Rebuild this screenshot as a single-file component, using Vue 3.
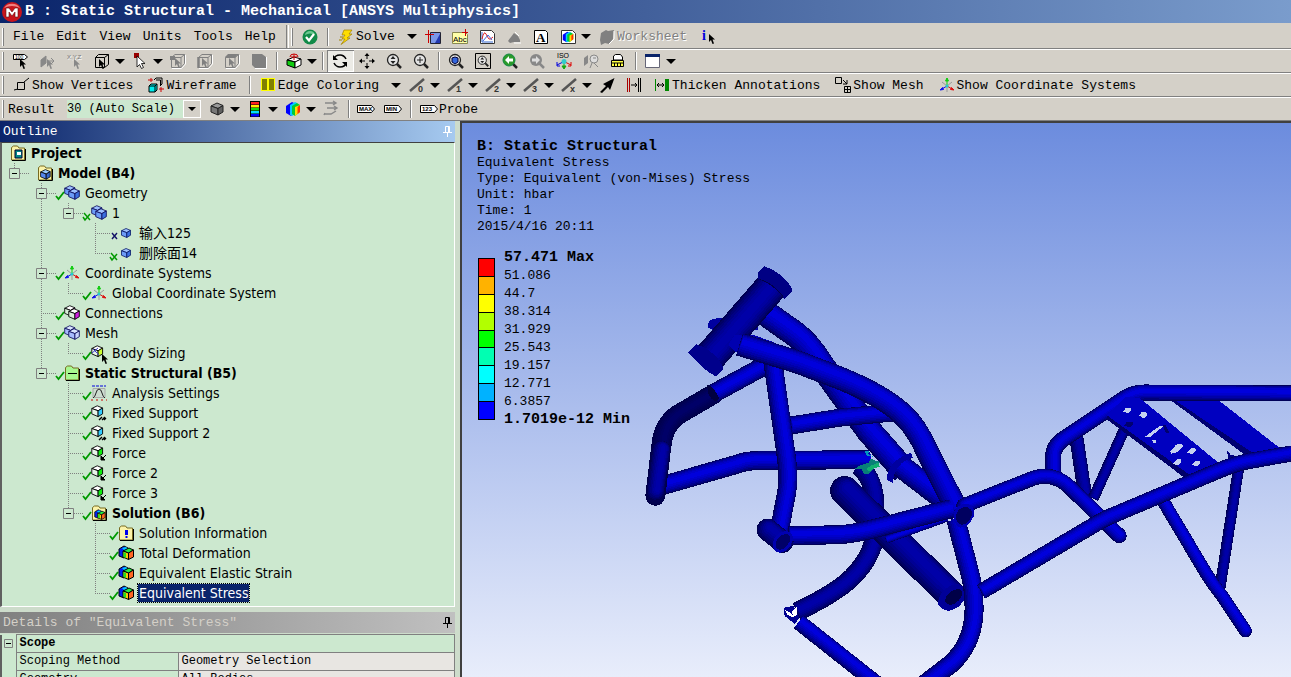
<template>
  <div class="app">
    <header class="title-bar">
      <svg class="logo" viewBox="0 0 22 22" aria-hidden="true">
        <circle cx="11" cy="11" r="10" fill="#c8141c" />
        <path d="M3 7a9 8 0 0 1 16 0q-8-4-16 0z" fill="#f08080" />
        <path d="M5 16V7h3l3 4 3-4h3v9h-3v-5l-3 4-3-4v5z" fill="#fff" stroke="#601010" stroke-width=".6" />
      </svg>
      <h1>B : Static Structural - Mechanical [ANSYS Multiphysics]</h1>
    </header>

    <div class="toolbar first">
      <span class="grip"></span>
      <nav class="menu">
        <button v-for="m in menus" :key="m" type="button">{{ m }}</button>
      </nav>
      <span class="band-edge"></span>
      <span class="grip"></span>
      <template v-for="(t, i) in standardTools" :key="i">
        <span v-if="t.sep" class="sep"></span>
        <button v-else type="button" :class="toolClass(t)" :aria-label="t.label || t.hint" :disabled="t.off">
          <svg class="icon" viewBox="0 0 16 16" v-html="icons[t.icon]"></svg>
          <span v-if="t.label">{{ t.label }}</span>
          <i v-if="t.drop" class="arrow"></i>
        </button>
      </template>
    </div>

    <div v-for="(bar, b) in toolbars" :key="b" class="toolbar">
      <span class="grip"></span>
      <template v-if="b === 2">
        <label class="result-label" for="result-scale">Result</label>
        <div class="combo">
          <select id="result-scale">
            <option>30 (Auto Scale)</option>
            <option>1.0 (True Scale)</option>
          </select>
          <span class="combo-btn"><i class="arrow"></i></span>
        </div>
      </template>
      <template v-for="(t, i) in bar" :key="i">
        <span v-if="t.sep" class="sep"></span>
        <button v-else type="button" :class="toolClass(t)" :aria-label="t.label || t.hint" :disabled="t.off">
          <svg class="icon" viewBox="0 0 16 16" v-html="icons[t.icon]"></svg>
          <span v-if="t.label">{{ t.label }}</span>
          <i v-if="t.drop" class="arrow"></i>
        </button>
      </template>
    </div>

    <main class="workspace">
      <aside class="side">
        <div class="pane-title">
          <h2>Outline</h2>
          <button type="button" class="pin" aria-label="Pin outline">
            <svg viewBox="0 0 9 11"><path d="M2.5 6V.5h4V6M5.5 1v5M0 6.5h9M4.5 7v4" /></svg>
          </button>
        </div>
        <ul class="tree">
          <li v-for="n in tree" :key="n.text" class="node">
            <span v-for="(g, k) in n.guides" :key="k" class="guide">
              <svg viewBox="0 0 27 20"><path :d="guidePaths[g]" /></svg>
              <button v-if="n.open && k === n.guides.length - 1" type="button" class="toggle" aria-label="Collapse">
                <svg viewBox="0 0 11 11"><path d="M.5.5h10v10H.5z" fill="#cce8cf" stroke="#808080" /><path d="M3 5.5h5" stroke="#000" /></svg>
              </button>
            </span>
            <svg class="status" viewBox="0 0 8 16" v-html="marks[n.mark]"></svg>
            <svg class="icon" viewBox="0 0 16 16" v-html="icons[n.icon]"></svg>
            <span :class="['node-text', { bold: n.bold, selected: n.selected }]">{{ n.text }}</span>
          </li>
        </ul>

        <div class="pane-title inactive">
          <h2>Details of "Equivalent Stress"</h2>
          <button type="button" class="pin" aria-label="Pin details">
            <svg viewBox="0 0 9 11"><path d="M2.5 6V.5h4V6M5.5 1v5M0 6.5h9M4.5 7v4" /></svg>
          </button>
        </div>
        <table class="details">
          <colgroup>
            <col class="col-gutter" />
            <col class="col-name" />
            <col />
          </colgroup>
          <tbody>
            <tr>
              <td class="gutter">
                <button type="button" class="toggle" aria-label="Collapse scope">
                  <svg viewBox="0 0 9 9"><path d="M.5.5h8v8h-8z" fill="none" stroke="#808080" /><path d="M2 4.5h5" stroke="#000" /></svg>
                </button>
              </td>
              <th colspan="2">Scope</th>
            </tr>
            <tr>
              <td class="gutter"></td>
              <td>Scoping Method</td>
              <td class="value">Geometry Selection</td>
            </tr>
            <tr>
              <td class="gutter"></td>
              <td>Geometry</td>
              <td class="value">All Bodies</td>
            </tr>
          </tbody>
        </table>
      </aside>

      <section class="viewport">
        <svg class="model" viewBox="462 124 829 553" preserveAspectRatio="xMinYMin slice" aria-label="Stress plot of the frame">
          <g v-for="(p, i) in parts" :key="i">
            <template v-if="p.w">
              <path
                v-for="(s, k) in shades"
                :key="k"
                :d="p.d"
                fill="none"
                :stroke="s[p.tone || 'lit']"
                :stroke-width="p.w * s.k"
                :stroke-linecap="p.cap || 'butt'"
                stroke-linejoin="round"
                :transform="`translate(${p.w * s.shift} ${-p.w * s.shift})`"
              />
            </template>
            <path v-else :d="p.d" :fill="p.fill" />
          </g>
        </svg>
        <div class="info">
          <p class="strong">B: Static Structural</p>
          <p v-for="line in info" :key="line">{{ line }}</p>
        </div>
        <div class="legend">
          <div class="swatches">
            <span v-for="c in bands" :key="c" :style="{ background: c }"></span>
          </div>
          <ol>
            <li v-for="(v, i) in levels" :key="v" :class="{ strong: i === 0 || i === 9 }">{{ v }}</li>
          </ol>
        </div>
      </section>
    </main>
  </div>
</template>

<script setup>
const menus = ["File", "Edit", "View", "Units", "Tools", "Help"];

// isometric cube: top, left and right face colours
const cube = (t, l, r, s = "#000") =>
  `<path d="M2 5 8 2l6 2.5-5 3z" fill="${t}" stroke="${s}"/><path d="M2 5l7 2.5V14l-7-3z" fill="${l}" stroke="${s}"/><path d="M9 7.5 14 4.5V11l-5 3z" fill="${r}" stroke="${s}"/>`;
const small = (t, l, r) => `<g transform="translate(2 2) scale(.75)">${cube(t, l, r, "#001060")}</g>`;
const pair = (t, l, r, s = "#101060") =>
  `<g transform="translate(-1 -1) scale(.85)">${cube(t, l, r, s)}</g><g transform="translate(3 2) scale(.88)">${cube(t, l, r, s)}</g>`;
const load = (r, extra) => `<g transform="translate(-1 -1) scale(.9)">${cube("#fff", "#e8f4e8", r)}</g>${extra}`;
const cursor = (c = "#000", x = 7, y = 6) =>
  `<path transform="translate(${x} ${y})" d="M0 0v8l2-2 1.500 4 1.500-.5-1.500-4H6z" fill="${c}"/>`;
const grayCube = (face) =>
  `<path d="M1.500 4.500 5 1.500h9.500v9L11 14.500H1.500z" fill="none" stroke="#808080"/><path d="M1.500 4.500H11v10M11 4.500l3.500-3" fill="none" stroke="#808080"/><path d="M15.500 2v9l-4 4.500H2" fill="none" stroke="#fff"/>${face}${cursor("#808080", 5, 5)}`;
const lens = (inner, c = "#222") =>
  `<path d="M10.500 10.500 15 15" stroke="${c}" stroke-width="2.500"/><circle cx="7" cy="7" r="5.500" fill="#e4e4e4" stroke="${c}" stroke-width="1.300"/>${inner}`;
const axes =
  '<path d="M8 8V1M8 1 6.500 4h3z" stroke="#1c1" fill="#1c1"/><path d="M8 9l6 3.500M15 13l-3.500-.5 1-2z" stroke="#d11" fill="#d11"/><path d="M8 9l-6 3.500M1 13l3.500-.5-1-2z" stroke="#11e" fill="#11e"/><path d="M3 5l5 4 5-4M8 9v6" stroke="#999" fill="none"/><circle cx="8" cy="9" r="1.500" fill="#2cc"/>';
const folder = (inner, c = "#fbf3a8") =>
  `<path d="M1.500 15V2.500l2-1.500h4l1.500 2h5.500v12z" fill="${c}" stroke="#776a20"/><path d="M2 15.500h13.500V4" fill="none" stroke="#000"/>${inner}`;
const edge = (n) =>
  `<path d="M1 14 15 2" stroke="#555" stroke-width="2.500"/><text x="9" y="15" font-size="9" font-weight="700" fill="#333">${n}</text>`;
const tag = (t) =>
  `<path d="M-.5 4.500h14l3 3.500-3 3.500h-14z" fill="#fff" stroke="#000"/><text x="1" y="10" font-size="6" font-weight="700">${t}</text>`;
const rainbow =
  '<path d="M1 5 7 1 11 3v8l-5 4-5-3z" fill="#00f"/><path d="M5 4l5-3 2 1v10l-5 3-2-1z" fill="#0cf"/><path d="M7 5l5-3 3 2v7l-5 4-3-2z" fill="#0c3"/><path d="M10 6l5-2v7l-5 4z" fill="#fd0"/><path d="M12.500 6 15 4v7l-2.500 2z" fill="#f30"/>';
const rainbowPair =
  '<path d="M1 4 6 1l4 2v7l-4 3-5-2z" fill="#02e" stroke="#000"/><path d="M4 3l4-1 2 2-3 2z" fill="#0cf"/><path d="M5 6l6-3 4.500 2-5 3z" fill="#2e4" stroke="#000"/><path d="M5 6l5.500 2v6.500L5 12z" fill="#fc0" stroke="#000"/><path d="M10.500 8l5-3v7l-5 2.500z" fill="#f62" stroke="#000"/><path d="M5.500 7 8 8v5l-2.500-1z" fill="#2d2"/>';

const icons = {
  check: '<circle cx="8" cy="8" r="7.500" fill="#118a48"/><path d="M3 6a5 4 0 0 1 10 0q-5-3-10 0z" fill="#6cc890"/><path d="M4 8l3 3.500L12 5" stroke="#fff" stroke-width="2.200" fill="none"/>',
  bolt: '<path d="M6 1h8l-3 4h3l-5 4h3L3 15.500 7 10H4l3-4H4z" fill="#fd0" stroke="#a08000" stroke-width=".7"/><path d="M2 8h3M1 11h3" stroke="#a08000"/>',
  section: '<path d="M5.500 3.500h10v11h-10z" fill="#7a96e8" stroke="#223"/><path d="M10 14 15 5v9z" fill="#2338b0"/><path d="M0 5.500h9M3.500 1v13" stroke="#c00"/>',
  note: '<path d="M.5 3.500h13l2 2v9H.5z" fill="#ffffa8" stroke="#888850"/><text x="1" y="13" font-size="8">Abc</text><path d="M13.500 0v7M10 3.500h6" stroke="#c00"/>',
  chart: '<path d="M1.500 1.500h11l3 3v10h-14z" fill="#fff" stroke="#333"/><path d="M3 3v10h11" stroke="#36c" fill="none"/><path d="M3 10q2-9 4-5t3 5 4-2" stroke="#d22" fill="none"/><path d="M4 12l5-6 4 5" stroke="#46d" fill="none"/>',
  ghost: '<path d="M2 12q2-3 3-4l3-4 4 3 2 4v2H8l-4 1z" fill="#808080"/><path d="M9 3l4 4M8 14h7" stroke="#fff"/>',
  letter: '<path d="M1.500 1.500h11l2 2v11h-13z" fill="#fff" stroke="#000"/><text x="3" y="13" font-size="13" font-weight="700" font-family="Liberation Serif, serif">A</text>',
  picture: `<path d="M1.500 1.500h11l3 3v10h-14z" fill="#fff" stroke="#333"/><g transform="translate(2 2) scale(.75)">${rainbow}</g>`,
  worksheet: '<path d="M2 4l5-3 2 1 6-1-1 9-4 5-4-1-4 2-1-5z" fill="#808080"/><path d="M15 2v8l-5 5" stroke="#fff" fill="none"/>',
  help: `<text x="1" y="11" font-size="14" font-weight="700" fill="#00d" font-family="Liberation Serif, serif">i</text>${cursor("#000", 8, 5)}`,
  tagPick: `<path d="M.5 1.500h11l3 2.500-3 2.500H.5z" fill="#fff" stroke="#000"/><text x="2" y="6" font-size="5">100</text>${cursor()}`,
  axisPick: `<path d="M1 14V7l5-4v7zM7 8h7M11 5l3 3-3 3" fill="none" stroke="#888"/><path d="M1 14V7l5-4v7z" fill="#888"/>${cursor("#888")}`,
  xyz: `<text x="0" y="6" font-size="6" fill="#777">X,Y,Z</text>${cursor("#888")}`,
  boxPick: `<path d="M1.500 4.500 4.500 1.500h10v10l-4 3h-9zM1.500 4.500h9v10M10.500 4.500l4-3" fill="none" stroke="#000"/>${cursor("#000", 5, 6)}`,
  pointer: '<path d="M2 0h5v5H2z" fill="#900"/><path d="M5 3v11l2.500-2.500 2 4 2-1-2-4H13z" fill="#fff" stroke="#000" stroke-width=".8"/>',
  vertex: grayCube('<path d="M0 3h5v4H0z" fill="#808080"/>'),
  edgePick: grayCube('<path d="M1.500 4v11" stroke="#808080" stroke-width="2.500"/>'),
  face: grayCube('<path d="M1 4l3-3h10l-3 4z" fill="#808080"/>'),
  body: '<path d="M1 1h10l4 3v11H4l-3-3z" fill="#808080"/><path d="M15.500 4v11.500H4" stroke="#fff" fill="none"/>',
  extend: `<path d="M1 7l7-3 7 2-5 3z" fill="#fff" stroke="#000"/><path d="M1 7l8 2v6l-8-3z" fill="#1c1" stroke="#000"/><path d="M9 9l6-3v6l-6 3z" fill="#fff" stroke="#000"/><path d="M4 4a4 3 0 0 1 8 0M8 1v6M5 4h6" stroke="#c00" fill="none"/>`,
  rotate: '<path d="M2 6q1-4 6-4 4 0 6 4M14 10q-1 4-6 4-4 0-6-4" stroke="#000" fill="none" stroke-width="1.500"/><path d="M1 2v5h5zM15 14V9h-5z"/>',
  pan: '<path d="M8 1v5M8 10v5M1 8h5M10 8h5" stroke="#000"/><path d="M8 0 5.500 3h5zM8 16l-2.500-3h5zM0 8l3-2.500v5zM16 8l-3-2.500v5z"/>',
  zoom: lens('<path d="M7 3 4.500 6h5zM7 11 4.500 8h5z" fill="#222"/>'),
  zoomIn: lens('<path d="M7 4v6M4 7h6" stroke="#222"/>'),
  zoomFit: lens('<path d="M4 5l3-1 3 1v4l-3 2-3-2z" fill="#36d" stroke="#003"/>'),
  zoomBox: `<path d="M.5.5h15v15H.5z" fill="none" stroke="#000"/><g transform="translate(2 2) scale(.75)">${lens('<path d="M7 3 4.500 6h5zM7 11 4.500 8h5z" fill="#222"/>')}</g>`,
  prev: '<path d="M10.500 10.500 15 15" stroke="#222" stroke-width="2.500"/><circle cx="7" cy="7" r="6" fill="#2a9a2a" stroke="#184"/><path d="M3 7l4-4v2.500h4v3H7V11z" fill="#fff"/>',
  next: '<path d="M10.500 10.500 15 15" stroke="#888" stroke-width="2.500"/><circle cx="7" cy="7" r="6" fill="#888"/><path d="M11 7 7 3v2.500H3v3h4V11z" fill="#ddd"/>',
  iso: '<text x="1" y="5" font-size="7">ISO</text><path d="M8 9v6M6 13l2 3 2-3z" stroke="#1a1" fill="#1a1"/><path d="M7 9l-6 3M1 9v4h3" stroke="#00d" fill="none"/><path d="M9 9l6 3M15 9v4h-3" stroke="#d00" fill="none"/><circle cx="8" cy="8.500" r="2.500" fill="#3cc"/>',
  look: '<path d="M1 13V5l4-3v8z" fill="#888"/><circle cx="11" cy="6" r="4" fill="#ddd" stroke="#888"/><path d="M10 5h3M9 10l-2 5M11 10l4 4" stroke="#888"/>',
  ruler: '<path d="M3.500 7V3l2-1.500h5L12.500 4v3z" fill="#fff" stroke="#000"/><path d="M1.500 7.500h12v6h-12z" fill="#ff4" stroke="#000"/><path d="M2 10h11M4.500 10v3M7.500 10v3M10.500 10v3" stroke="#000"/>',
  window: '<path d="M.5 1.500h14v13H.5z" fill="#fff" stroke="#667"/><path d="M0 1h15v3H0z" fill="#0a246a"/>',
  vertices: '<path d="M3.500 5.500h7v7h-7zM0 13l4-1M10 5l5-4" fill="none" stroke="#000"/>',
  wire: '<path d="M6 3l2-2h6v6l-2 2M8 3h4.500v6" fill="none" stroke="#000"/><path d="M1 9l2-2h6v6l-2 2H1z" fill="#0ee" stroke="#000"/><path d="M1 9h6v6M7 9l2-2" stroke="#000" fill="none"/><path d="M0 3h5M3 1v4M11 12h5M13 10v5" stroke="#c00"/>',
  coloring: '<path d="M1 1h14v13H1z" fill="#ff0"/><path d="M2 2h5v11H2zM9 2h5v11H9z" fill="#808000"/>',
  e0: edge("0"), e1: edge("1"), e2: edge("2"), e3: edge("3"), ex: edge("x"),
  thickArrow: '<path d="M1 15l6-6-3-2L15.500 1 11 13l-2-3-6 6z"/>',
  bars: '<path d="M1.500 1v14M3.500 1v14" stroke="#a00"/><path d="M12.500 1v14M14.500 1v14M5 8h6M9 6l2 2-2 2" stroke="#000" fill="none"/>',
  thicken: '<path d="M1.500 2v12" stroke="#080"/><path d="M3 8h7M5 6 3 8l2 2M8 6l2 2-2 2" stroke="#000" fill="none"/><path d="M11 2h4v12h-4z" fill="#080"/>',
  mesh: '<path d="M.5.5h6v6h-6zM9.500 9.500h6v6h-6zM9.500 12.500h6M12.500 9.500v6M8 3l4 4M12 3v4H8" fill="none" stroke="#000"/>',
  axes,
  grayBox: cube("#999", "#777", "#606060", "#222"),
  contour: '<path d="M3 0h10v16H3z"/><path d="M4 1h8v2.500H4z" fill="#f22"/><path d="M4 4h8v2.500H4z" fill="#fe0"/><path d="M4 7h8v2.500H4z" fill="#1d1"/><path d="M4 10h8v2.500H4z" fill="#0df"/><path d="M4 13h8v2.500H4z" fill="#00f"/>',
  rainbow,
  vectors: '<path d="M2 2h10M10 0l3 2-3 2M4 7h9M11 5l3 2-3 2M1 13h7l5-3M2 12l-1 2" fill="none" stroke="#888" stroke-width="1.400"/>',
  max: tag("MAX"), min: tag("MIN"), probe: tag("123"),
  project: folder('<path d="M5 5h7v8H5z" fill="#088" stroke="#003"/><path d="M7 7h4v3H7z" fill="#fff"/>'),
  model: folder(`<g transform="translate(2 3) scale(.8)">${cube("#9cf", "#58e", "#36c")}</g>`),
  geometry: pair("#9cc0ff", "#6c9cf8", "#3c70e0"),
  solid: small("#9cc0ff", "#6c9cf8", "#3c70e0"),
  connections: pair("#fff", "#d8f0d8", "#d020e0", "#000"),
  meshTree: pair("#d8e4ff", "#a8bcff", "#c8d4ff"),
  sizing: load("#cf3", cursor("#000", 11, 9)) + '<path d="M2 4l6 6M1 8l6-5" stroke="#44c"/>',
  analysis: folder('<path d="M4 8.500h9" stroke="#000"/>', "#a8f890"),
  settings: '<path d="M2 3.500h12v9H2z" fill="#ccdccf" stroke="#aaa"/><path d="M2 13q2-1 3-5t3-4 3 4 3 5" fill="none" stroke="#222"/><path d="M1 1h14" stroke="#00d" stroke-width="1" stroke-dasharray="3 1"/><path d="M0 15h16" stroke="#c00" stroke-width="1" stroke-dasharray="2 3"/>',
  fixed: load("#3cf", '<path d="M8 15l3-3M11 15l3-3M13 15l2-2" stroke="#000" stroke-width="1.400"/>'),
  force: load("#1e1", '<path d="M10 15v-4l4 4zM15 10l-4 4" stroke="#000"/>'),
  solution: folder(`<g transform="translate(3 4) scale(.72)">${rainbowPair}</g>`),
  infoTree: folder('<path d="M7 5h3v5H7z" fill="#00e"/><path d="M7.500 11h2v2h-2z" fill="#00e"/>'),
  result: rainbowPair,
};

const tick = '<path d="M0 11l2.500 3L8 7" fill="none" stroke="#090" stroke-width="1.800"/>';
const marks = {
  none: "",
  tick,
  cross: '<path d="M2 8l5 6M7 8l-5 6" stroke="#116" stroke-width="1.400"/>',
  tickCross: '<path d="M0 12l2 3 5-6M1 8l6 7" fill="none" stroke="#090" stroke-width="1.500"/>',
};

const sep = { sep: true };

const standardTools = [
  { icon: "check", hint: "Status" },
  sep,
  { icon: "bolt", label: "Solve", drop: true },
  { icon: "section", hint: "New section plane" },
  { icon: "note", hint: "Annotation" },
  { icon: "chart", hint: "Chart" },
  { icon: "ghost", hint: "Symbols", off: true },
  { icon: "letter", hint: "Comment" },
  { icon: "picture", hint: "Figure", drop: true },
  { icon: "worksheet", label: "Worksheet", off: true },
  { icon: "help", hint: "Selection information" },
];

const toolbars = [
  [
    { icon: "tagPick", hint: "Label" },
    { icon: "axisPick", hint: "Direction", off: true },
    { icon: "xyz", hint: "Hit point", off: true },
    { icon: "boxPick", hint: "Select type", drop: true },
    { icon: "pointer", hint: "Select mode", drop: true },
    { icon: "vertex", hint: "Vertex", off: true },
    { icon: "edgePick", hint: "Edge", off: true },
    { icon: "face", hint: "Face", off: true },
    { icon: "body", hint: "Body", off: true },
    sep,
    { icon: "extend", hint: "Extend", drop: true },
    sep,
    { icon: "rotate", hint: "Rotate", active: true },
    { icon: "pan", hint: "Pan" },
    { icon: "zoom", hint: "Zoom" },
    { icon: "zoomIn", hint: "Box zoom" },
    sep,
    { icon: "zoomFit", hint: "Zoom to fit" },
    { icon: "zoomBox", hint: "Magnifier" },
    { icon: "prev", hint: "Previous view" },
    { icon: "next", hint: "Next view", off: true },
    { icon: "iso", hint: "Isometric view" },
    { icon: "look", hint: "Look at", off: true },
    { icon: "ruler", hint: "Manage views" },
    sep,
    { icon: "window", hint: "Viewports", drop: true },
  ],
  [
    { icon: "vertices", label: "Show Vertices" },
    { icon: "wire", label: "Wireframe" },
    sep,
    { icon: "coloring", label: "Edge Coloring", drop: true },
    { icon: "e0", hint: "Free edges", drop: true },
    { icon: "e1", hint: "Single edges", drop: true },
    { icon: "e2", hint: "Double edges", drop: true },
    { icon: "e3", hint: "Triple edges", drop: true },
    { icon: "ex", hint: "Multiple edges", drop: true },
    { icon: "thickArrow", hint: "Edge direction" },
    { icon: "bars", hint: "Connections" },
    { icon: "thicken", label: "Thicken Annotations" },
    { icon: "mesh", label: "Show Mesh" },
    { icon: "axes", label: "Show Coordinate Systems" },
  ],
  [
    { icon: "grayBox", hint: "Geometry", drop: true },
    { icon: "contour", hint: "Contours", drop: true },
    { icon: "rainbow", hint: "Edges", drop: true },
    { icon: "vectors", hint: "Vectors", off: true },
    sep,
    { icon: "max", hint: "Maximum" },
    { icon: "min", hint: "Minimum" },
    sep,
    { icon: "probe", label: "Probe" },
  ],
];

const toolClass = (t) => ["tool", { labelled: t.label, drop: t.drop, active: t.active }];

// guides, one letter per level: "v" passes by, "t" branches, "l" ends, "e" is empty
const guidePaths = {
  v: "M12.5 0v20",
  t: "M12.5 0v20M12 10.5h15",
  l: "M12.5 0v10M12 10.5h15",
  e: "",
};

const tree = [
  { text: "Project", icon: "project", guides: "", mark: "none", bold: true },
  { text: "Model (B4)", icon: "model", guides: "l", mark: "none", bold: true, open: true },
  { text: "Geometry", icon: "geometry", guides: "et", mark: "tick", open: true },
  { text: "1", icon: "geometry", guides: "evl", mark: "tickCross", open: true },
  { text: "输入125", icon: "solid", guides: "evet", mark: "cross" },
  { text: "删除面14", icon: "solid", guides: "evel", mark: "tickCross" },
  { text: "Coordinate Systems", icon: "axes", guides: "et", mark: "tick", open: true },
  { text: "Global Coordinate System", icon: "axes", guides: "evl", mark: "tick" },
  { text: "Connections", icon: "connections", guides: "et", mark: "tick" },
  { text: "Mesh", icon: "meshTree", guides: "et", mark: "tick", open: true },
  { text: "Body Sizing", icon: "sizing", guides: "evl", mark: "tick" },
  { text: "Static Structural (B5)", icon: "analysis", guides: "el", mark: "tick", bold: true, open: true },
  { text: "Analysis Settings", icon: "settings", guides: "eet", mark: "tick" },
  { text: "Fixed Support", icon: "fixed", guides: "eet", mark: "tick" },
  { text: "Fixed Support 2", icon: "fixed", guides: "eet", mark: "tick" },
  { text: "Force", icon: "force", guides: "eet", mark: "tick" },
  { text: "Force 2", icon: "force", guides: "eet", mark: "tick" },
  { text: "Force 3", icon: "force", guides: "eet", mark: "tick" },
  { text: "Solution (B6)", icon: "solution", guides: "eel", mark: "tick", bold: true, open: true },
  { text: "Solution Information", icon: "infoTree", guides: "eeet", mark: "tick" },
  { text: "Total Deformation", icon: "result", guides: "eeet", mark: "tick" },
  { text: "Equivalent Elastic Strain", icon: "result", guides: "eeet", mark: "tick" },
  { text: "Equivalent Stress", icon: "result", guides: "eeel", mark: "tick", selected: true },
].map((n) => ({ ...n, guides: [...n.guides] }));

const info = [
  "Equivalent Stress",
  "Type: Equivalent (von-Mises) Stress",
  "Unit: hbar",
  "Time: 1",
  "2015/4/16 20:11",
];

const bands = ["#ff0000", "#ffb200", "#ffff00", "#b2ff00", "#00ff00", "#00ffb2", "#00ffff", "#00b2ff", "#0000ff"];
const levels = [
  "57.471 Max", "51.086", "44.7", "38.314", "31.929",
  "25.543", "19.157", "12.771", "6.3857", "1.7019e-12 Min",
];

// every tube is stroked several times, from its dark rim to its lit middle
const shades = [
  { k: 1, shift: 0, lit: "#000058", mid: "#000050", dark: "#000048" },
  { k: 0.92, shift: 0.02, lit: "#000078", mid: "#000064", dark: "#00004c" },
  { k: 0.82, shift: 0.04, lit: "#000090", mid: "#000074", dark: "#000050" },
  { k: 0.7, shift: 0.06, lit: "#0000a8", mid: "#000084", dark: "#000056" },
  { k: 0.56, shift: 0.08, lit: "#0000bc", mid: "#000094", dark: "#00005c" },
  { k: 0.42, shift: 0.1, lit: "#0000cc", mid: "#0000a0", dark: "#000062" },
  { k: 0.24, shift: 0.11, lit: "#0000dc", mid: "#0000a8", dark: "#000068" },
];

const parts = [
  // rear legs and plates
  { d: "M1075 436 1084 496", w: 14, tone: "mid" },
  { d: "M1124 428 1092 499", w: 11, tone: "mid" },
  { d: "M1237 470 1218 592", w: 11, tone: "mid" },
  { d: "M1161 500 1205 574Q1211 584 1220 595L1244 631", w: 13, cap: "round" },
  { d: "M1171 399 1180 394 1215 399 1279 449 1250 456z", fill: "#0000c0" },
  { d: "M1171 399 1251 453 1246 457 1171 402z", fill: "#000070" },
  { d: "M1052 474V458Q1052 446 1063 439L1120 401Q1131 393 1143 393L1295 394", w: 16 },
  { d: "M1106 416 1125 397 1139 399 1217 463 1210 472 1185 476z", fill: "#0000c0" },
  { d: "M1106 416 1188 475 1183 478 1106 420z", fill: "#000068" },
  { d: "M1122 412l3-4 4 0 1 3-3 3zM1138 416l3-4 4 1 1 3-4 3zM1169 452l6-7 5-1 2 3-7 6-5 1zM1186 453l3-4 4-1 2 3-4 4zM1172 464l3-4 4-1 1 4-4 3zM1191 465l2-3 5-1 1 3-4 3zM1144 437l15-11 3 1-14 11zM1151 441l3-1 1 3-3 0z", fill: "#c4d0f0" },
  { d: "M1123 426l3-4 5 0 1 3-4 3zM1161 425l3 0 4 8-3 1z", fill: "#000070" },
  { d: "M1225 450l4 5 8 2-1 3-9-2z", fill: "#000080" },

  // lower loop behind the frame
  { d: "M858 466Q874 480 874 505V535Q872 556 852 577 836 593 796 612", w: 19, tone: "mid" },
  { d: "M798 622 884 690", w: 16 },

  // left handle
  { d: "M662 486 735 465Q745 461 758 461L868 460", w: 19 },
  { d: "M655 496 661 446Q663 425 678 415L714 394", w: 20, tone: "dark", cap: "round" },
  { d: "M655 492 661 450", w: 18, tone: "mid", cap: "round" },
  { d: "M713 394 772 362", w: 19 },
  { d: "M707 386q6 0 12 13l-4 3q-9-5-8-16z", fill: "#000040" },

  // down tube and its collar
  { d: "M764 313 795 335Q808 345 821 366L868 431 904 472", w: 26 },
  { d: "M898 465 958 511", w: 23 },
  { d: "M886 480q0-18 24-27l2 5q-18 5-20 25z", fill: "#0000a0" },
  { d: "M707 328q0-9 10-9h40v12h-44z", fill: "#0000a0" },

  // stress concentration
  { d: "M859 466l9-3 2-4 5 2 4 1-1 4-6 4-4 4-5 0-2-5-7 0z", fill: "#088078" },
  { d: "M866 469l4-3 8-3 1 4-6 2-5 3z", fill: "#10b070" },
  { d: "M864 451l5 1-2 2 5 3-6-1z", fill: "#0098c0" },

  // head tube
  { d: "M771 287 709 358", w: 32, tone: "mid" },
  { d: "M757 274 764 267Q785 275 792 291L784 300Q776 285 757 279z", fill: "#000084" },
  { d: "M757 279q18 5 27 20-9-12-27-20", fill: "#000048" },
  { d: "M688 353 696 345Q716 352 723 369L716 377Q704 372 688 353z", fill: "#00008c" },

  // fork crossing
  { d: "M790 426 840 418 892 413", w: 18 },
  { d: "M773 368 785 452Q789 478 786 493L778 535", w: 19, cap: "round" },
  { d: "M728 345l6-9h20l20 7-10 14-30-5z", fill: "#0000b0" },
  { d: "M739 345 798 363 840 379Q882 396 902 415 916 428 926 451L956 510", w: 23 },

  // bottom bracket
  { d: "M844 491 949 594", w: 29, tone: "mid", cap: "round" },
  { d: "M937 604q1-15 18-20 11 2 10 12-5 13-17 15-8-1-11-7z", fill: "#000098" },
  { d: "M944 600q3-9 13-11 6 1 4 7-5 9-12 9-5-1-5-5z", fill: "#000048" },
  { d: "M885 540 946 518", w: 8 },
  { d: "M788 536 838 535Q855 534 877 528L950 509", w: 19 },
  { d: "M767 530 782 542", w: 22, tone: "mid", cap: "round" },
  { d: "M772 544q2-11 14-13 8 2 6 10-3 11-13 12-7-1-7-9z", fill: "#0000b0" },
  { d: "M775 544q2-8 10-10 6 1 4 8-4 8-10 8-4-1-4-6z", fill: "#000068" },

  // main loop and rear rails
  { d: "M955 520 968 570Q974 590 973 614 971 645 950 664L920 687", w: 19 },
  { d: "M963 506 1026 481Q1050 470 1068 487L1118 536", w: 15, cap: "round" },
  { d: "M980 592 1095 524Q1105 518 1118 513L1215 472Q1235 463 1256 460L1295 453", w: 16 },
  { d: "M953 516q1-11 12-12 10 2 8 12-5 12-14 12-6-3-6-12z", fill: "#0000b4" },
  { d: "M955 517q1-9 10-10 7 2 6 9-4 9-10 9-6-1-6-8z", fill: "#000060" },

  // open end of the lower loop
  { d: "M783 608l10-2 6 12-5 6-10-8z", fill: "#000090" },
  { d: "M784 610l6 3 4 5-7-3zM791 612l5-5 0 8-3 2z", fill: "#ffffff" },
];
</script>

<style>
body {
  margin: 0;
}
</style>

<style scoped>
.app {
  height: 100vh;
  display: flex;
  flex-direction: column;
  overflow: hidden;
  background: #d4d0c8;
  color: #000;
  font-family: "Liberation Mono", "Noto Sans CJK SC", monospace;
  font-size: 13px;
}

h1,
h2,
p,
ul,
ol {
  margin: 0;
  padding: 0;
  list-style: none;
}

button {
  padding: 0;
  border: none;
  background: none;
  color: inherit;
  font: inherit;
}

.title-bar {
  display: flex;
  align-items: center;
  gap: 2px;
  height: 23px;
  padding-left: 1px;
  flex: none;
  background: linear-gradient(90deg, #0a246a, #7a9ccc);
  color: #fff;
}

.title-bar h1 {
  font-size: 15px;
  line-height: 23px;
}

.logo {
  width: 22px;
  height: 22px;
}

/* toolbars */
.toolbar {
  display: flex;
  align-items: center;
  flex: none;
  height: 22px;
  border-top: 1px solid #fff;
  border-bottom: 1px solid #808080;
}

.toolbar.first {
  height: 23px;
  padding-top: 2px;
  border-top: none;
}

.grip {
  width: 2px;
  height: 18px;
  margin: 0 4px 0 2px;
  border-right: 1px solid #808080;
  border-left: 1px solid #fff;
  box-sizing: border-box;
}

.menu {
  display: flex;
  gap: 12px;
  padding: 0 10px 0 5px;
}

.band-edge {
  width: 1px;
  height: 23px;
  border-left: 1px solid #808080;
  border-right: 1px solid #fff;
}

.sep {
  width: 8px;
  height: 18px;
  background: linear-gradient(90deg, transparent 3px, #808080 3px, #808080 4px, #fff 4px, #fff 5px, transparent 5px);
}

.tool {
  display: flex;
  align-items: center;
  flex: none;
  height: 22px;
  padding: 0 6px 0 5px;
  white-space: nowrap;
}

.tool.drop {
  padding-right: 2px;
}

.tool.drop .arrow {
  margin-left: 5px;
}

.tool.labelled {
  gap: 2px;
  padding: 0 9px 0 6px;
}

.tool.labelled.drop {
  padding-right: 3px;
}

.tool.labelled.drop .arrow {
  margin-left: 10px;
}

.tool.active {
  background: #ecebe6;
  box-shadow: inset 1px 1px #808080, inset -1px -1px #fff;
}

.tool:disabled {
  color: #808080;
  text-shadow: 1px 1px #fff;
}

.icon {
  width: 16px;
  height: 16px;
  flex: none;
  overflow: visible;
  font-family: "Liberation Sans", sans-serif;
}

.arrow {
  width: 0;
  border: 5px solid transparent;
  border-top-color: #000;
  border-bottom: none;
}

.result-label {
  width: 59px;
}

.combo {
  display: flex;
  width: 134px;
  height: 18px;
  margin-right: 3px;
  background: #cce8cf;
}

.combo select {
  flex: 1;
  min-width: 0;
  padding: 0;
  border: none;
  appearance: none;
  background: none;
  font: inherit;
  font-size: 12px;
}

.combo-btn {
  display: flex;
  align-items: center;
  justify-content: center;
  width: 18px;
  border: 1px solid #fff;
  box-sizing: border-box;
  background: #d4d0c8;
}

.combo-btn .arrow {
  border-width: 4px 4px 0;
}

/* side panes */
.workspace {
  display: flex;
  flex: 1;
  min-height: 0;
}

.side {
  width: 455px;
  flex: none;
  padding-right: 5px;
  background: #cddccb;
}

.pane-title {
  display: flex;
  align-items: center;
  justify-content: space-between;
  height: 21px;
  padding: 0 3px;
  background: linear-gradient(90deg, #0a246a, #a6caf0);
  color: #fff;
}

.pane-title.inactive {
  margin-top: 5px;
  background: linear-gradient(90deg, #808080, #c0c0c0);
  color: #d4d0c8;
}

.pane-title h2 {
  font-size: 13px;
  font-weight: 400;
}

.pin {
  display: flex;
}

.pin svg {
  width: 9px;
  height: 11px;
  fill: none;
  stroke: #fff;
}

.inactive .pin svg {
  stroke: #000;
}

.tree {
  padding: 0 0 3px;
  border: 1px solid #fff;
  border-top: 1px solid #404040;
  border-left: 2px solid #606060;
  background: #cce8cf;
  font-family: "DejaVu Sans Condensed", "Noto Sans CJK SC", sans-serif;
  font-size: 14px;
}

.node {
  display: flex;
  align-items: center;
  height: 20px;
}

.guide {
  display: flex;
  position: relative;
  width: 27px;
  height: 20px;
}

.guide > svg {
  width: 27px;
  height: 20px;
  fill: none;
  stroke: #808080;
  stroke-dasharray: 1 1;
  shape-rendering: crispEdges;
}

.toggle {
  display: flex;
}

.guide .toggle {
  position: absolute;
  top: 5px;
  left: 7px;
}

.guide .toggle svg {
  width: 11px;
  height: 11px;
}

.status {
  width: 8px;
  height: 16px;
  flex: none;
  overflow: visible;
}

.node-text {
  margin-left: 4px;
  padding: 0 1px;
  line-height: 18px;
  white-space: nowrap;
}

.bold {
  font-weight: 700;
}

.selected {
  background: #0a246a;
  color: #fff;
  outline: 1px dotted #000;
}

.details {
  width: 100%;
  margin-top: 1px;
  border-collapse: collapse;
  table-layout: fixed;
  border-left: 2px solid #606060;
  background: #cce8cf;
  font-size: 12px;
}

.col-gutter {
  width: 15px;
}

.col-name {
  width: 162px;
}

.details td,
.details th {
  height: 17px;
  padding: 0 3px;
  border: 1px solid #808080;
  text-align: left;
  line-height: 17px;
}

.details .gutter {
  padding: 0 0 0 2px;
  border-top: none;
  border-bottom: none;
}

.details .value {
  background: #e8e6e2;
}

.details .toggle svg {
  width: 9px;
  height: 9px;
}

/* graphics window */
.viewport {
  position: relative;
  flex: 1;
  min-width: 0;
  overflow: hidden;
  border-top: 2px solid #404040;
  border-left: 2px solid #404040;
  background: linear-gradient(#6c8cde, #e8edfb);
}

.model {
  position: absolute;
  inset: 0;
  width: 100%;
  height: 100%;
  shape-rendering: crispEdges;
}

.info {
  position: relative;
  padding: 16px 0 0 15px;
  line-height: 16px;
}

.strong {
  font-size: 15px;
  font-weight: 700;
}

.legend {
  position: relative;
  display: flex;
  gap: 9px;
  padding: 14px 0 0 16px;
}

.swatches {
  display: grid;
  grid-template-rows: repeat(9, 1fr);
  gap: 1px;
  width: 15px;
  margin: 9px 0;
  border: 1px solid #000;
  background: #000;
}

.legend li {
  height: 18px;
  line-height: 18px;
}
</style>
